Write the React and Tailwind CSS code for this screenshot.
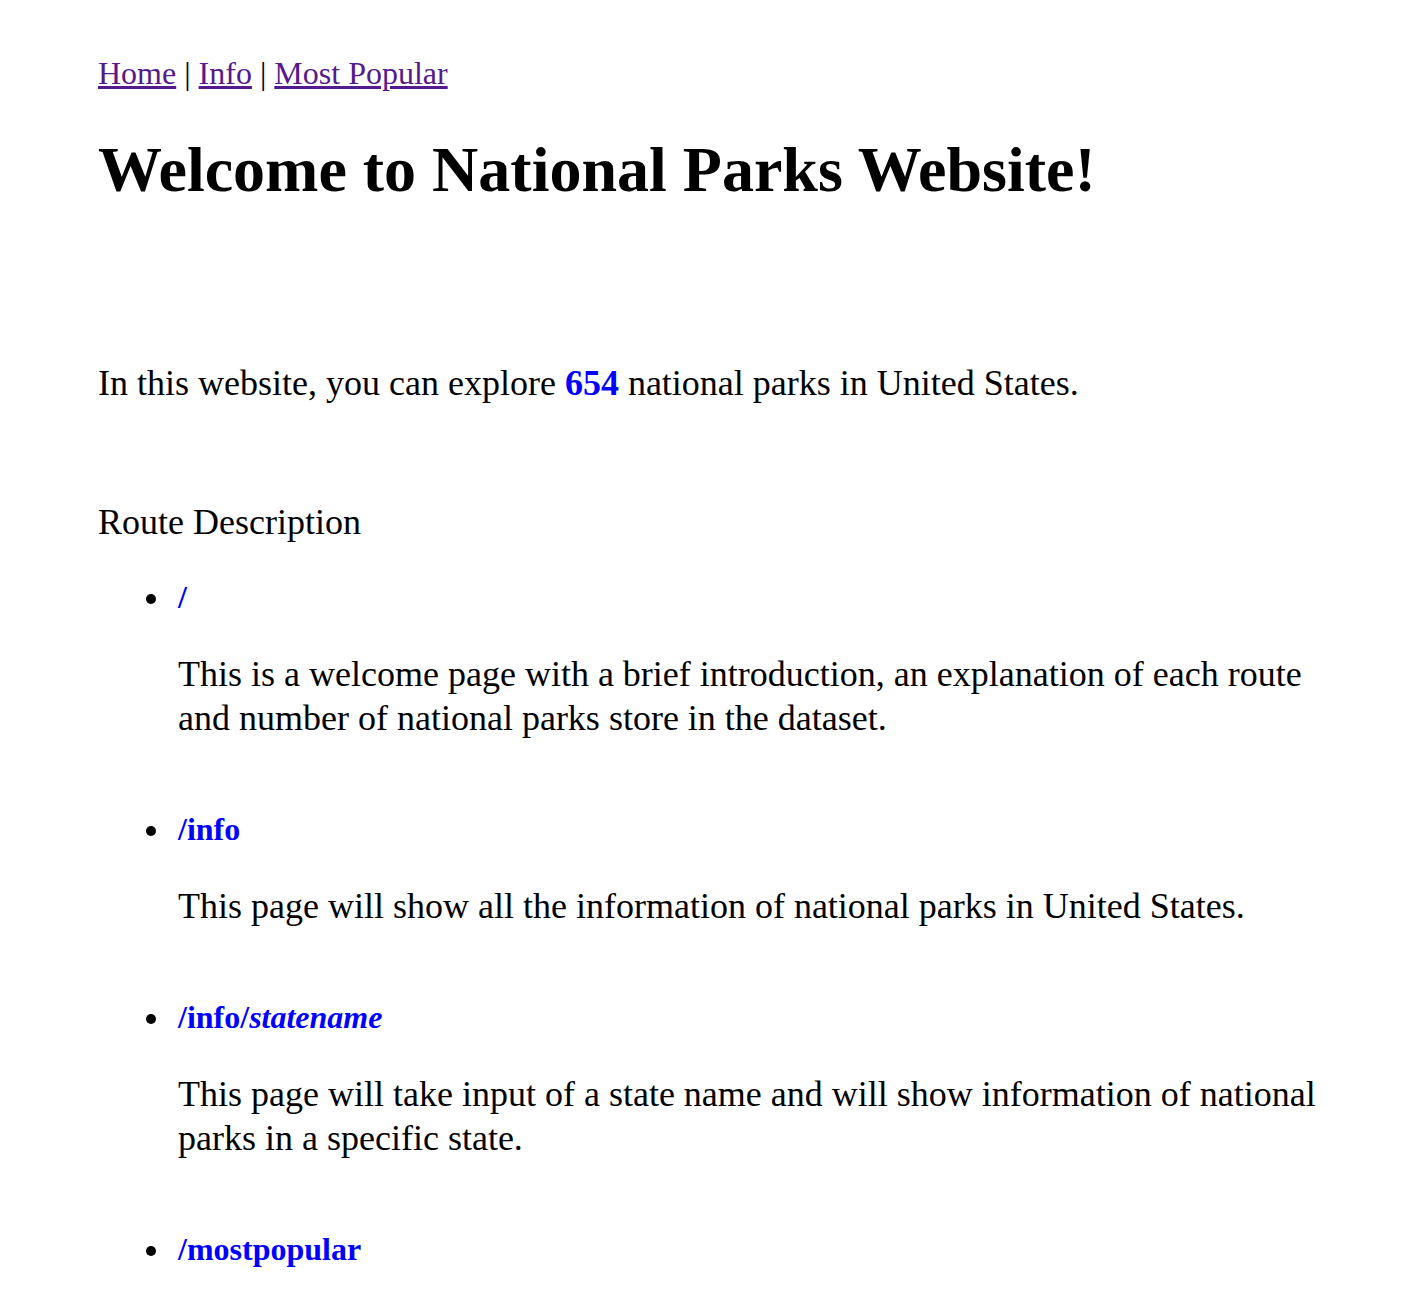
import React from 'react';

const routes = [
  {
    path: '/',
    desc: 'This is a welcome page with a brief introduction, an explanation of each route and number of national parks store in the dataset.',
  },
  {
    path: '/info',
    desc: 'This page will show all the information of national parks in United States.',
  },
  {
    path: '/info/',
    param: 'statename',
    desc: 'This page will take input of a state name and will show information of national parks in a specific state.',
  },
  {
    path: '/mostpopular',
  },
];

const App = () => {
  return (
    <div className="min-h-screen bg-white text-black font-['Liberation_Serif','Times_New_Roman',serif] pl-[98px] pr-[86px] pt-[55px]">
      {/* nav */}
      <nav className="text-[32px] leading-[37px]">
        <a href="#" className="text-[#551a8b] underline">Home</a>
        {' | '}
        <a href="#" className="text-[#551a8b] underline">Info</a>
        {' | '}
        <a href="#" className="text-[#551a8b] underline">Most Popular</a>
      </nav>

      <h1 className="mt-[41px] text-[64px] leading-[74px] font-bold">Welcome to National Parks Website!</h1>

      <p className="mt-[154px] text-[36px] leading-[44px]">
        In this website, you can explore <span className="font-bold text-[#0000ff]">654</span> national parks in United States.
      </p>

      <p className="mt-[95px] text-[36px] leading-[44px]">Route Description</p>

      <ul className="mt-[35px] pl-[80px]">
        {routes.map((r) => (
          <li key={r.path + (r.param || '')} className="relative text-[32px] leading-[37px] mb-[71px]">
            {/* bullet */}
            <span className="absolute left-[-32px] top-[15px] w-[10px] h-[10px] rounded-full bg-black" />
            <span className="font-bold text-[#0000ff]">
              {r.path}
              {r.param && <i>{r.param}</i>}
            </span>
            {r.desc && (
              <p className="mt-[36px] text-[36px] leading-[44px]">{r.desc}</p>
            )}
          </li>
        ))}
      </ul>
    </div>
  );
};

export default App;
